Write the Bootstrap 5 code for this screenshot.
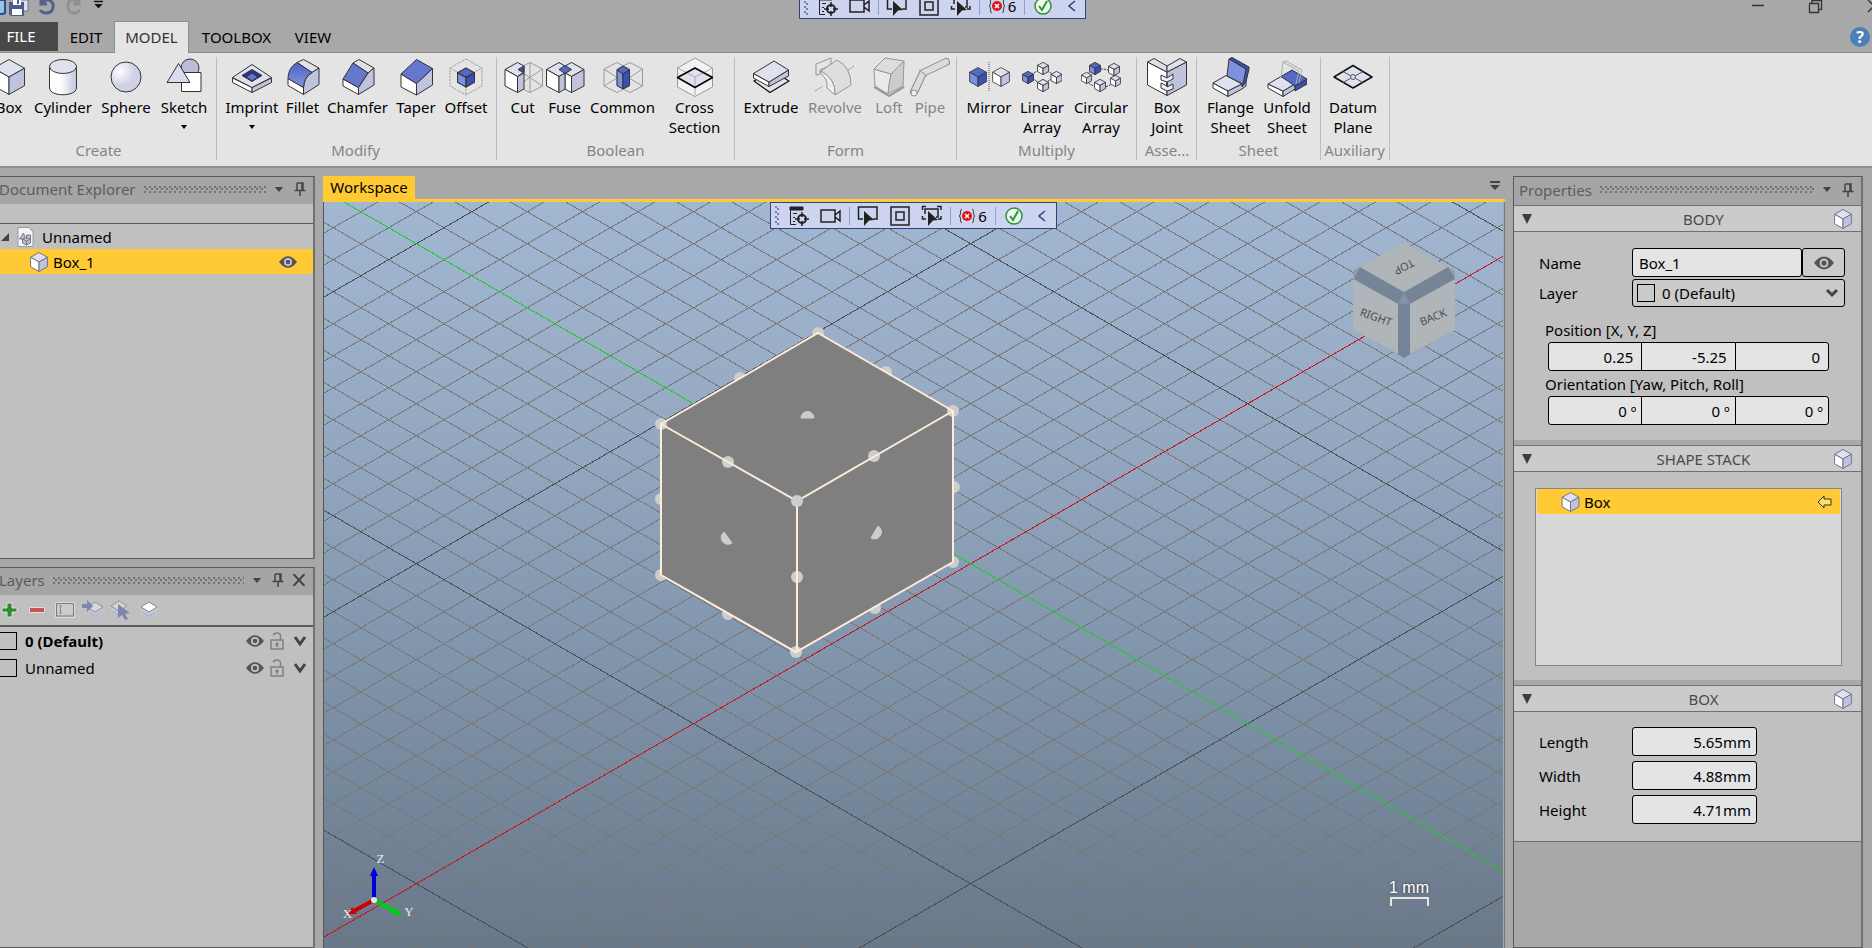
<!DOCTYPE html>
<html lang="en">
<head>
<meta charset="utf-8">
<meta name="viewport" content="width=device-width, initial-scale=1">
<title>Modeler</title>
<link href="https://cdn.jsdelivr.net/npm/bootstrap@5.3.0/dist/css/bootstrap.min.css" rel="stylesheet">
<style>
:root{--line:#5a5a5a;--chrome:#a8a8a8;--panel:#c0c0c0;--accent:#ffca33}
body{font:15px/20px "Noto Sans","Open Sans",sans-serif;color:#000;background:var(--chrome);height:100vh}
svg{display:block;flex:none}
.btn{font-size:15px;line-height:20px;color:#000;padding:0;border:0;border-radius:0}
.btn:disabled{color:#858585;opacity:1}
/* title bar and tabs */
.titlebar{height:21px}
.tabs{height:32px;border-bottom:1px solid #8c8c8c}
.tabs .nav-link{color:#000;padding:0;border:0;border-radius:0;height:31px;line-height:32px;text-align:center}
.tabs .file-tab{background:#484848;color:#fff;width:58px;height:29px;margin-top:1px;line-height:29px;padding-right:16px}
.tabs .nav-link.active{background:#e4e4e4;color:#333;width:75px;height:32px;border:1px solid #8c8c8c;border-bottom:0;border-radius:0;line-height:30px}
.w-edit{width:56px}.w-tool{width:95px}.w-view{width:58px}
.help{width:20px;height:20px;border-radius:50%;background:#4a7fb8;color:#fff;font-weight:700;font-size:16px;margin:6px 2px 0 auto}
/* ribbon */
.ribbon{height:115px;background:#e4e4e4;border-bottom:2px solid #8f8f8f;margin-left:-18px;padding-top:4px}
.rgroup{padding:0 5px 0 4px;border-right:1px solid #bdbdbd;height:103px;margin-right:1px}
.tools{display:grid;height:83px}
.tools .btn{display:flex;flex-direction:column;align-items:center;justify-content:flex-start;text-align:center}
.tools svg.ic{width:40px;height:40px}
.glabel{color:#858585;text-align:center;white-space:nowrap}
.g-create{width:235px}.g-create .tools{grid-template-columns:46px 62px 64px 52px}
.g-modify{width:279px;padding:0 9px 0 6px}.g-modify .tools{grid-template-columns:56px 45px 65px 52px 48px}
.g-bool{width:237px}.g-bool .tools{grid-template-columns:41px 43px 73px 71px}
.g-form{width:221px}.g-form .tools{grid-template-columns:62px 66px 42px 40px}
.g-mult{width:179px}.g-mult .tools{grid-template-columns:54px 52px 66px}
.g-asse{width:59px;padding:0 2px}.g-asse .tools{grid-template-columns:54px}
.g-sheet{width:123px}.g-sheet .tools{grid-template-columns:57px 56px}
.g-aux{width:68px;padding:0 4px 0 2px}.g-aux .tools{grid-template-columns:58px}
.caret{width:0;height:0;border:3px solid transparent;border-top:4px solid #000;border-bottom:0}
.ic{stroke:#333;stroke-width:1;stroke-linejoin:round;fill:none;--t:#dfe1ef;--l:#fff;--r:#c0c3dc}
.blue{--t:#5468c8;--l:#7f90dc;--r:#3c50b4}
.soft{stroke:#6c6f86}
.off{stroke:#959595}
/* floating command bar */
.cmdbar{position:absolute;height:27px;width:287px;background:#ccd4ef;border:1px solid #35407c;z-index:3}
.cmdbar .btn{height:25px;width:32px;display:flex;align-items:center;justify-content:center}
.cmdbar .btn.probs{width:40px}
.cmdbar .btn.fold{width:25px}
.cmdbar .vr{width:1px;height:18px;background:#8fa0cc;opacity:1;margin:auto 2px}
.probs span{padding-left:2px}
.cmdgrip{width:5px;height:20px;margin:auto 3px auto 4px;background:radial-gradient(circle at 1px 1px,#7580ae 1px,transparent 1px) 0 0/5px 5px,radial-gradient(circle at 1px 1px,#7580ae 1px,transparent 1px) 2px 2px/5px 5px}
.bar-main{top:0;left:calc(50% - 144px)}
.bar-top{top:-8px;left:calc(50% - 137px)}
/* docked panels */
.dock{padding-top:8px}
.side-left{width:319px;margin-left:-4px}
.side-right{width:350px;margin:0 9px 0 8px}
.pane{background:var(--panel);border:1px solid var(--line);border-right:2px solid #707070}
.pane-head{height:27px;background:#a5a5a5;color:#5c5c5c;padding:0 7px 3px 2px}
.pane-head .drop{margin:0 10px 0 8px}
.grip{flex:1;height:7px;background:radial-gradient(circle at 1px 1px,#727272 1px,transparent 1px) 0 0/5px 5px,radial-gradient(circle at 1px 1px,#727272 1px,transparent 1px) 2px 2px/5px 5px}
.pane-explorer{height:383px}
.searchrow{height:20px;border-bottom:1px solid #5c5c5c}
.treerow{height:25px}
.sel{background:var(--accent);border-radius:3px}
.tree-child{padding:0 16px 0 32px}
.ltools{height:32px;border-bottom:2px solid #5c5c5c;margin-left:-2px}
.ltools .btn{width:28px;display:flex;justify-content:center}
.lrow{height:27px;padding:0 5px 0 2px}
.lrow .eye{margin:0 6px 0 auto}
.toplit{--top:#fff}
.swatch{width:18px;height:18px;border:1px solid #000;flex:none}
.wtab{background:var(--accent);height:23px;width:92px;line-height:23px;color:#000;text-align:center;text-decoration:none}
.wline{border-bottom:3px solid var(--accent);height:26px}
.view{background:linear-gradient(#a1b7d1,#96a9c3 30%,#8499b0 55%,#697889);border-left:1px solid #555;overflow:hidden}
.viewwrap{border-right:1px solid #787878;padding-right:1px}
.corner{position:absolute}
.nav-cube{top:38px;right:44px}.triad{left:16px;bottom:22px}.scale{right:74px;bottom:42px}
.scale div{font:16px/18px "Liberation Sans",sans-serif;color:#fff;text-shadow:0 0 3px #333}
.bracket{width:39px;height:9px;border:2px solid #e6e6e6;border-bottom:0;margin-left:1px}
/* property sections */
.props{background:var(--chrome)}
.props .pane-head{height:28px;padding-left:5px}
.sec-head{height:27px;background:#cbcbcb;color:#4a4a4a;border-top:1px solid #707070;border-bottom:1px solid #707070}
.sec-head span{flex:1;text-align:center;padding-left:42px}
.sec{background:var(--panel);margin-bottom:5px}
.sec-body{height:208px;padding-top:16px}
.box-body{height:130px;padding-top:15px;border-bottom:1px solid #707070;gap:5px}
.sec label{width:93px;flex:none}
.form-control,.form-select{font-size:15px;line-height:20px;border:1px solid #000;border-radius:3px;background-color:#e4e4e4;color:#000;height:29px;min-height:0;padding:2px 6px}
.name-row{height:29px;margin-bottom:2px}
.form-select{background-color:#cbcbcb;height:28px;padding-left:29px;background-position:right 5px center;background-size:14px 12px;background-image:url("data:image/svg+xml,%3Csvg xmlns='http://www.w3.org/2000/svg' viewBox='0 0 14 12'%3E%3Cpath d='M2 3l5 5 5-5' fill='none' stroke='%23444' stroke-width='3'/%3E%3C/svg%3E")}
.eye-btn{width:43px;height:29px;background:#cbcbcb;border:1px solid #000;border-radius:3px;display:flex;align-items:center;justify-content:center}
.lswatch{position:absolute;left:5px;top:5px}
.pad-l{padding-left:25px}.pad-r{padding-right:16px}
.triple{margin:0 32px 0 34px}
.triple .form-control{text-align:right;padding-right:8px}
.triple.deg .form-control{padding-right:5px}
.cap{margin-left:31px;padding:3px 0 2px}
.cap-first{padding-top:13px}
.size{width:125px;text-align:right;padding-right:5px}
.stack{height:178px;margin:0 19px 0 21px;border:1px solid #85858f;background:#d8d8d8;padding:0 1px}
</style>
</head>
<body class="d-flex flex-column overflow-hidden">
<svg width="0" height="0" class="position-absolute" aria-hidden="true">
  <symbol id="cube" viewBox="-1 -1 34 38" overflow="visible"><path d="M16 0L32 9L16 18L0 9Z" fill="var(--t)"/><path d="M0 9L16 18V36L0 27Z" fill="var(--l)"/><path d="M32 9L16 18V36L32 27Z" fill="var(--r)"/></symbol>
  <symbol id="hex" viewBox="-1 -1 34 38"><path d="M16 0L32 9V27L16 36L0 27V9ZM0 9L16 18L32 9M16 18V36" fill="none"/></symbol>
  <symbol id="eye" viewBox="0 0 18 12"><path d="M0 6Q9-5.500 18 6Q9 17.500 0 6Z" fill="#555" stroke="none"/><circle cx="9" cy="6" r="4" fill="#c6c6c6" stroke="none"/><circle cx="9" cy="6" r="2.300" fill="#555" stroke="none"/></symbol>
  <symbol id="pin" viewBox="0 0 12 14"><path d="M3 1H9V8M3 1V8M0.500 8.500H11.500M6 9V14M8 1V8" fill="none" stroke="#444" stroke-width="1.500"/></symbol>
  <symbol id="down" viewBox="0 0 10 6"><path d="M0 0H10L5 6Z" fill="#444"/></symbol>
  <symbol id="chev" viewBox="0 0 14 12"><path d="M2 2L7 9L12 2" fill="none" stroke="#444" stroke-width="3"/></symbol>
  <symbol id="lock" viewBox="0 0 14 18"><path d="M1 8H13V17H1ZM3.500 3.500Q3.500 1 7 1Q10.500 1 10.500 4V8" fill="none" stroke="#808080" stroke-width="1.500"/><path d="M7 10.500V15M5.500 12H8.500" stroke="#777" stroke-width="1.500"/></symbol>
  <symbol id="layers" viewBox="0 0 18 18"><path d="M9 7L17 12L9 17L1 12Z" fill="#aab5cc" stroke="#ccd"/><path d="M9 4L17 9L9 14L1 9Z" fill="#bcc6dc" stroke="#ccd"/><path d="M9 1L17 6L9 11L1 6Z" fill="var(--top,#ddd)" stroke="#888"/></symbol>
</svg>

<header>
  <div class="titlebar position-relative d-flex justify-content-between overflow-hidden">
    <svg width="110" height="21" viewBox="0 0 110 21" aria-hidden="true">
      <path d="M0 0H5V13Q4 14 0 14" fill="#9bc1e6" stroke="#234f8d" stroke-width="2"/>
      <path d="M16 0H28V11H22" fill="#dde1ee" stroke="#778"/><path d="M9 2H24V16H11L9 14Z" fill="#4d5c8e"/><path d="M13 0H21V5H13ZM12 9H22V15H12Z" fill="#fff"/><path d="M17 0H19V4H17Z" fill="#4d5c8e"/>
      <path d="M41 0V4H47M42 3Q49-4 53 4Q54 13 46 13Q42 13 40 10" fill="none" stroke="#53618f" stroke-width="3"/>
      <path d="M79 0V4H73M78 3Q71-4 68 4Q67 13 74 13Q78 13 80 10" fill="none" stroke="#919191" stroke-width="3"/>
      <path d="M94 1.500H103" stroke="#111" stroke-width="1.500"/><path d="M94.500 4H102.500L98.500 8.500Z" fill="#111"/>
    </svg>
    <svg width="130" height="21" viewBox="1742 0 130 21" fill="none" stroke="#333" stroke-width="1.300" aria-hidden="true"><path d="M1752 5.500H1764M1809.500 3.500H1818.500V12.500H1809.500ZM1812 3V0.500H1821.500V9.500H1819M1868 0L1880 12M1868 12L1880 0"/></svg>
    <div class="cmdbar bar-top d-flex" data-bar></div>
  </div>
  <div class="d-flex tabs">
    <ul class="nav nav-tabs border-0">
      <li><a class="nav-link file-tab" href="#">FILE</a></li>
      <li><a class="nav-link w-edit" href="#">EDIT</a></li>
      <li><a class="nav-link active" href="#">MODEL</a></li>
      <li><a class="nav-link w-tool" href="#">TOOLBOX</a></li>
      <li><a class="nav-link w-view" href="#">VIEW</a></li>
    </ul>
    <button class="btn help">?</button>
  </div>
  <nav class="ribbon d-flex">
    <div class="rgroup g-create"><div class="tools">
      <button class="btn"><svg class="ic" viewBox="0 0 40 40"><use href="#cube" x="3.500" y="1.500" width="33" height="37"/></svg>Box</button>
      <button class="btn"><svg class="ic" viewBox="0 0 40 40"><defs><linearGradient id="gc"><stop offset=".4" stop-color="#fff"/><stop offset="1" stop-color="#c0c3dc"/></linearGradient><radialGradient id="gs" cx=".3" cy=".3"><stop offset="0" stop-color="#fff"/><stop offset="1" stop-color="#cfd1e4"/></radialGradient><linearGradient id="gb" y2="1" x2="0"><stop offset="0" stop-color="#4d62c4"/><stop offset="1" stop-color="#8595dc"/></linearGradient></defs><path d="M6.500 9V31C7 40 33 40 33.500 31V9" fill="url(#gc)"/><ellipse cx="20" cy="9.500" rx="13.500" ry="7" fill="#dfe1ef"/></svg>Cylinder</button>
      <button class="btn"><svg class="ic" viewBox="0 0 40 40"><circle cx="20" cy="20" r="15" fill="url(#gs)"/></svg>Sphere</button>
      <button class="btn"><svg class="ic" viewBox="0 0 40 40"><circle cx="26" cy="11" r="9" fill="#b9bdd8"/><path d="M17.500 15.500H37V34.500H17.500Z" fill="#fff"/><path d="M14.500 6.500L26 25.500H3Z" fill="#d9dcee"/></svg>Sketch<span class="caret mt-2"></span></button>
    </div><div class="glabel">Create</div></div>
    <div class="rgroup g-modify"><div class="tools">
      <button class="btn"><svg class="ic" viewBox="0 0 40 40"><path d="M.5 21L20 30.500V35.500L.5 25.500Z" fill="#fff"/><path d="M39.500 21L20 30.500V35.500L39.500 25.500Z" fill="#c0c3dc"/><path d="M20 7.500L39.500 20.500L20 30.500L.5 20.500Z" fill="#dfe1ef"/><path d="M20 12.500L30 18.500L20 24.500L10 18.500Z" fill="#26359a"/><path d="M20 16L26 20L20 24L14 20Z" fill="#5f73d0"/></svg>Imprint<span class="caret mt-2"></span></button>
      <button class="btn"><svg class="ic" viewBox="0 0 40 40"><path d="M14 5.500L20.500 2.500L36 11L29 15.500Z" fill="#dfe1ef"/><path d="M29 15.500L36 11V27.500L20.500 37.500V30.500Q21 20 29 15.500Z" fill="#c0c3dc"/><path d="M5 21.500V28.500L20.500 37.500V30.500Z" fill="#fff"/><path d="M14 5.500Q5 11 5 21.500L20.500 30.500Q21 20 29 15.500Z" fill="url(#gb)"/></svg>Fillet</button>
      <button class="btn"><svg class="ic" viewBox="0 0 40 40"><path d="M15 6L21 2.500L36 11L30 16Z" fill="#dfe1ef"/><path d="M30 16L36 11V28L20.500 37.500V30.500Z" fill="#c0c3dc"/><path d="M5 22V29L20.500 37.500V30.500Z" fill="#fff"/><path d="M15 6L5 22L20.500 30.500L30 16Z" fill="#6678ce"/></svg>Chamfer</button>
      <button class="btn"><svg class="ic" viewBox="0 0 40 40"><path d="M5 17V30L20.500 38V26.500Z" fill="#fff"/><path d="M36.500 11.500V28L20.500 38V26.500Z" fill="#c0c3dc"/><path d="M20.500 2.500L36.500 11.500L20.500 26.500L5 17Z" fill="#6678ce"/></svg>Taper</button>
      <button class="btn"><svg class="ic" viewBox="0 0 40 40"><use href="#hex" x="3" y="1" width="34" height="38" stroke="#999" stroke-dasharray="2 1"/><g class="blue"><use href="#cube" x="11" y="10" width="18" height="21" stroke-width="2"/></g></svg>Offset</button>
    </div><div class="glabel">Modify</div></div>
    <div class="rgroup g-bool"><div class="tools">
      <button class="btn"><svg class="ic" viewBox="0 0 40 40"><path d="M27 5.500L39.500 12V29L27 35.500L14 29V12ZM27 5.500V35.500M14 12L39.500 29M39.500 12L14 29" stroke="#9a9a9a"/><path d="M14.500 5.500L21 9V15L14.500 19.500L2 12.500Z" fill="#dfe1ef"/><path d="M2 12.500L14.500 19.500V35.500L2 29Z" fill="#fff"/><path d="M14.500 19.500L21 16V32L14.500 35.500Z" fill="#c0c3dc"/><path d="M15 12.500L21 9V16Z" fill="#3c50b4"/></svg>Cut</button>
      <button class="btn"><svg class="ic" viewBox="0 0 40 40"><path d="M14 5.500L20 9L26.500 5.500L39 12.500L26.500 19.500L20 16L14 19.500L1.500 12.500Z" fill="#dfe1ef"/><path d="M1.500 12.500L14 19.500V35.500L1.500 29ZM20 16L26.500 19.500V35.500L20 32Z" fill="#fff"/><path d="M14 19.500L20 16V32L14 35.500ZM39 12.500L26.500 19.500V35.500L39 29Z" fill="#c0c3dc"/><path d="M20 8.500L26.500 12.500L20 16.500L14 12.500Z" fill="#5468c8"/></svg>Fuse</button>
      <button class="btn"><svg class="ic" viewBox="0 0 40 40"><path d="M14 5.500L26.500 12V29L14 35.500L1 29V12ZM27 5.500L39.500 12V29L27 35.500L14 29V12ZM1 12L27 29M39.500 12L14 29M1 29L14 21M39.500 29L26 21" stroke="#9a9a9a"/><path d="M20 9L26.500 13L20 17L14 13Z" fill="#5468c8"/><path d="M14 13L20 17V32L14 28.500Z" fill="#7f90dc"/><path d="M26.500 13L20 17V32L26.500 28.500Z" fill="#3c50b4"/></svg>Common</button>
      <button class="btn"><svg class="ic" viewBox="0 0 40 40"><path d="M20 1L37.500 11V30L20 39.500L2.500 30V11Z" stroke="#9a9a9a" fill="#f2f2f2"/><path d="M20 11L37.500 20.500L20 30.500L2.500 20.500Z" fill="#dfe1ef" stroke="none"/><path d="M2.500 11L20 20L37.500 11M20 20V38" stroke="#aaa"/><path d="M20 11L37.500 20.500L20 30.500L2.500 20.500Z" stroke="#000" stroke-width="1.500"/></svg>Cross<br>Section</button>
    </div><div class="glabel">Boolean</div></div>
    <div class="rgroup g-form"><div class="tools">
      <button class="btn"><svg class="ic" viewBox="0 0 40 40"><path d="M8 21L3 24L19 35.500L38 24L33 21" stroke="#111" stroke-width="1.300"/><path d="M2.500 16.500L18 25V29.500L2.500 21Z" fill="#fff"/><path d="M37.500 13L18 25V29.500L37.500 19Z" fill="#c0c3dc"/><path d="M23 4L37.500 13L18 25L2.500 16.500Z" fill="#dfe1ef"/></svg>Extrude</button>
      <button class="btn" disabled><svg class="ic off" viewBox="0 0 40 40"><path d="M0 34L8 29M33 13L39 9" stroke-dasharray="3 1"/><path d="M1 18V7L16 1V8L5 13V17Z" fill="#e4e4e4"/><path d="M6 14L22 3Q36 10 36 28L20 38Q21 22 6 14Z" fill="#dedede"/><path d="M6 14Q21 22 20 38L12 31Q13 22 6 17Z" fill="#eee"/></svg>Revolve</button>
      <button class="btn" disabled><svg class="ic off" viewBox="0 0 40 40"><path d="M5 30L20 39L35 30" stroke-width="2"/><path d="M5 12L22 17L19 37L6 29Z" fill="#eaeaea"/><path d="M22 17L35 4L34 29L19 37Q20 25 22 17Z" fill="#ccc"/><path d="M16 1L35 4L22 17L5 12Z" fill="#ddd"/></svg>Loft</button>
      <button class="btn" disabled><svg class="ic off" viewBox="0 0 40 40"><path d="M4 35L13 16L36 5" stroke="#8c8c8c" stroke-width="8" stroke-linecap="round"/><path d="M4 35L13 16L36 5" stroke="#dcdcdc" stroke-width="6" stroke-linecap="round"/><path d="M9 13L17 19"/><circle cx="4" cy="36" r="3" fill="#eee"/></svg>Pipe</button>
    </div><div class="glabel">Form</div></div>
    <div class="rgroup g-mult"><div class="tools">
      <button class="btn"><svg class="ic overflow-visible" viewBox="0 0 40 40"><g class="blue"><use href="#cube" x="0" y="10" width="18" height="20" stroke-width="1.500"/></g><path d="M20 5V35" stroke="#555" stroke-dasharray="1 1"/><use href="#cube" x="23" y="10" width="18" height="20" stroke-width="1.500"/></svg>Mirror</button>
      <button class="btn"><svg class="ic" viewBox="0 0 40 40"><path d="M7 19L20 11L34 19L20 28Z" stroke-dasharray="2 1"/><g stroke-width="2.500"><g class="blue"><use href="#cube" x="0" y="14" width="12" height="13"/></g><use href="#cube" x="15" y="5" width="12" height="13"/><use href="#cube" x="28.500" y="14" width="12" height="13"/><use href="#cube" x="15" y="22" width="12" height="13"/></g></svg>Linear<br>Array</button>
      <button class="btn"><svg class="ic" viewBox="0 0 40 40"><ellipse cx="20" cy="21" rx="15" ry="9" stroke-dasharray="2 1"/><g stroke-width="2.500"><g class="blue"><use href="#cube" x="8" y="5" width="12" height="13"/></g><use href="#cube" x="27" y="6" width="12" height="13"/><use href="#cube" x="0" y="15" width="11" height="12"/><use href="#cube" x="29" y="18" width="11" height="12"/><use href="#cube" x="13" y="22" width="12" height="13"/></g></svg>Circular<br>Array</button>
    </div><div class="glabel">Multiply</div></div>
    <div class="rgroup g-asse"><div class="tools">
      <button class="btn"><svg class="ic" viewBox="0 0 40 40"><path d="M.5 5L20 15V38.500L.5 28Z" fill="#fff"/><path d="M.5 5L7 1.500L20 9V15Z" fill="#dfe1ef"/><path d="M20 15L39.500 5V28L20 38.500Z" fill="#c0c3dc"/><path d="M20 9L33 1.500L39.500 5L20 15Z" fill="#dfe1ef"/><path d="M14 18L20 21L26 17V22L20 25V30L26 27V32L20 34L14 31V26L20 29V25L14 23Z" fill="#eef"/></svg>Box<br>Joint</button>
    </div><div class="glabel">Asse...</div></div>
    <div class="rgroup g-sheet"><div class="tools">
      <button class="btn"><svg class="ic" viewBox="0 0 40 40"><path d="M2 26L17 34V39.500L2 31Z" fill="#fff"/><path d="M2 26L15 18.500L31 27L17 34Z" fill="#dfe1ef"/><path d="M17 34L31 27L35 24V29L31 32L17 39.500Z" fill="#c0c3dc"/><path d="M18 2L21 .5L38 10V12L35 25L31 30V27L35 12Z" fill="#3c50b4"/><path d="M18 2L35 12L32 27L16 19Z" fill="#7f90dc"/></svg>Flange<br>Sheet</button>
      <button class="btn"><svg class="ic" viewBox="0 0 40 40"><path d="M1 27L16 34V39.500L1 31Z" fill="#fff"/><path d="M16 34L28 27V32L16 39.500Z" fill="#c0c3dc"/><path d="M1 27L14 19.500L28 27L16 34Z" fill="#dfe1ef"/><path d="M28 29L40 22V27L28 34Z" fill="#3c50b4"/><path d="M14 19.500L25 13L40 22L28 29Z" fill="#5468c8"/><path d="M14 20L16 5L19 4L35 13L32 26M16 5L32 14L29 27" stroke="#aaa"/></svg>Unfold<br>Sheet</button>
    </div><div class="glabel">Sheet</div></div>
    <div class="rgroup g-aux"><div class="tools">
      <button class="btn"><svg class="ic" viewBox="0 0 40 40"><path d="M20 8.500L39 20L20 31L1 20Z" fill="#dfe1ef" stroke="#111" stroke-width="1.500"/><path d="M10 14.500L30 25.500M30 14.500L10 25.500" stroke="#555"/><circle cx="20" cy="20" r="2.500" fill="#dfe1ef" stroke="#555"/></svg>Datum<br>Plane</button>
    </div><div class="glabel">Auxiliary</div></div>
  </nav>
</header>

<main class="d-flex flex-fill overflow-hidden">
  <aside class="side-left dock flex-shrink-0 d-flex flex-column gap-2">
    <section class="pane pane-explorer">
      <div class="pane-head d-flex align-items-center"><span class="me-2">Document Explorer</span><span class="grip"></span><svg class="drop" width="10" height="5"><use href="#down"/></svg><svg width="12" height="14"><use href="#pin"/></svg></div>
      <div class="searchrow"></div>
      <div class="treerow d-flex align-items-center ps-1"><svg width="8" height="8"><path d="M8 0V8H0Z" fill="#444"/></svg>
        <svg class="ms-2 me-2" width="17" height="20" viewBox="0 0 16 20"><path d="M.5.5H11.500L15.500 5V19.500H.5Z" fill="#f5f5f8" stroke="#99a"/><path d="M2 12L6 6L8 12ZM9 8H13V12H9ZM5 12L9 14V18L5 16ZM13 12L9 14V18L13 16Z" fill="#b8bdd0" stroke="#778"/></svg>Unnamed</div>
      <div class="treerow sel tree-child d-flex align-items-center"><svg class="ic soft me-1" width="20" height="20"><use href="#cube" width="20" height="20" stroke-width="1.800"/></svg>Box_1<svg class="ms-auto" width="18" height="12"><use href="#eye"/></svg></div>
    </section>
    <section class="pane flex-fill">
      <div class="pane-head d-flex align-items-center"><span class="me-2">Layers</span><span class="grip"></span><svg class="drop" width="10" height="5"><use href="#down"/></svg><svg width="12" height="14"><use href="#pin"/></svg><svg class="ms-2" width="14" height="12" viewBox="0 0 14 12"><path d="M1.500 0L12.500 12M12.500 0L1.500 12" stroke="#444" stroke-width="2"/></svg></div>
      <div class="ltools d-flex align-items-center">
        <button class="btn" aria-label="Add"><svg width="18" height="18"><path d="M7 2H12V7H17V11H12V16H7V11H2V7H7Z" fill="#2c8e2c" stroke="#ddd"/></svg></button>
        <button class="btn" aria-label="Remove"><svg width="16" height="6"><path d="M.5.5H15.500V5.500H.5Z" fill="#c85656" stroke="#ddd"/></svg></button>
        <button class="btn" aria-label="Rename"><svg width="20" height="16"><path d="M.5.5H19.500V15.500H.5Z" stroke="#ddd" fill="none"/><path d="M1.500 1.500H18.500V14H1.500Z" fill="#ccc" stroke="#777"/><path d="M4 4H7M5.500 4V11M4 11H7" stroke="#888"/></svg></button>
        <button class="btn" aria-label="Move"><svg width="22" height="20"><use href="#layers" x="4" y="1" width="18" height="18" opacity=".8"/><path d="M0 4H5V0L11 6L5 12V8H0Z" fill="#7d86ad"/></svg></button>
        <button class="btn" aria-label="Select"><svg width="22" height="20"><use href="#layers" width="18" height="18" opacity=".8"/><path d="M8 4L20 13L15 14L18 19L15 20L12 15L8 18Z" fill="#7d86ad"/></svg></button>
        <button class="btn toplit" aria-label="Layers"><svg width="18" height="18"><use href="#layers"/></svg></button>
      </div>
      <div class="lrow d-flex align-items-center"><span class="swatch me-2"></span><b>0 (Default)</b><svg class="eye" width="18" height="12"><use href="#eye"/></svg><svg width="14" height="18"><use href="#lock"/></svg><svg class="ms-2" width="16" height="12"><use href="#chev"/></svg></div>
      <div class="lrow d-flex align-items-center"><span class="swatch me-2"></span><span>Unnamed</span><svg class="eye" width="18" height="12"><use href="#eye"/></svg><svg width="14" height="18"><use href="#lock"/></svg><svg class="ms-2" width="16" height="12"><use href="#chev"/></svg></div>
    </section>
  </aside>

  <section class="dock flex-fill d-flex flex-column ms-2">
    <div class="wline d-flex justify-content-between"><a href="#" class="wtab">Workspace</a><svg class="mt-1 me-1" width="12" height="12"><path d="M1 2H11" stroke="#444" stroke-width="2"/><path d="M1 5H11L6 10Z" fill="#444"/></svg></div>
    <div class="viewwrap flex-fill d-flex">
      <div class="view flex-fill position-relative" id="view">
        <svg class="position-absolute w-100 h-100" aria-label="3D scene">
          <g transform="translate(-324 -202)" fill="none">
            <g shape-rendering="crispEdges"><path id="minor" stroke="#787878"/><path id="major" stroke="#4a4f55"/><path id="xaxis" stroke="#c8141e"/><path id="yaxis" stroke="#1ecc28"/></g>
            <g fill="#cdcdcd"><circle cx="818" cy="333" r="6"/><circle cx="740" cy="378" r="6"/><circle cx="886" cy="372" r="6"/><circle cx="661" cy="499" r="6"/><circle cx="954" cy="487" r="6"/><circle cx="661" cy="575" r="6"/><circle cx="728" cy="614" r="6"/><circle cx="953" cy="562" r="6"/><circle cx="875" cy="608" r="6"/></g>
            <path d="M818 333L953 411V562L796 652L661 575V424Z" fill="#7f7f7f"/>
            <g fill="#cdcdcd"><path d="M801 418A6 6 0 0 1 814 418ZM724 532L732 543A6 6 0 0 1 724 532ZM878 526L871 538A6 6 0 0 0 878 526Z" stroke="#cdcdcd"/><circle cx="661" cy="424" r="6"/><circle cx="953" cy="411" r="6"/><circle cx="728" cy="462" r="6"/><circle cx="874" cy="456" r="6"/><circle cx="797" cy="577" r="6"/><circle cx="796" cy="652" r="6"/></g>
            <path d="M818 333L953 411V562L796 652L661 575V424ZM661 424L797 501L953 411M797 501V652" stroke="#ffecd8" stroke-width="2"/>
            <circle cx="797" cy="501" r="6" fill="#cdcdcd"/>
          </g>
        </svg>
        <div class="cmdbar bar-main d-flex" data-bar></div>
        <svg class="corner nav-cube" width="108" height="120" viewBox="1351 242 108 120">
          <path d="M1404 244L1455 273V332L1404 360L1353 332V273Z" fill="#8f9cab"/>
          <path d="M1360 269L1404 294L1398 306L1354 281ZM1448 269L1404 294L1410 306L1455 281ZM1398 306L1404 294L1410 306V356L1404 360L1398 356Z" fill="#768497"/>
          <path d="M1404 294L1410 306H1398Z" fill="#8494a6"/>
          <path d="M1404 244L1448 269L1404 294L1360 269ZM1353 281L1398 306V356L1353 332ZM1410 306L1455 281V332L1410 356Z" fill="#b0b5b9"/>
          <g font-family="Noto Sans" font-size="11" fill="#4d4f52" text-anchor="middle"><text transform="rotate(20 1376 319)" x="1376" y="323">RIGHT</text><text transform="rotate(-22 1433 319)" x="1433" y="323">BACK</text><text transform="rotate(152 1404 269)" x="1404" y="273">TOP</text></g>
        </svg>
        <svg class="corner triad" width="80" height="76" viewBox="340 850 80 76">
          <path d="M374 900V872" stroke="#00d" stroke-width="4"/><path d="M374 867L378 876H370Z" fill="#00d"/>
          <path d="M374 900L352 912" stroke="#d00000" stroke-width="4"/><path d="M348 914L352 907L357 914Z" fill="#d00000"/>
          <path d="M374 900L396 912" stroke="#00cc10" stroke-width="4"/><path d="M402 916L392 914L396 907Z" fill="#00cc10"/><circle cx="374" cy="900" r="3" fill="#e8e8e8"/>
          <g font-family="Liberation Serif" font-size="13" fill="#e8ecf0" text-anchor="middle"><text x="380.500" y="863">Z</text><text x="347.500" y="918">X</text><text x="409" y="916">Y</text></g>
        </svg>
        <div class="corner scale"><div>1 mm</div><span class="bracket d-block"></span></div>
      </div>
    </div>
  </section>

  <aside class="side-right dock flex-shrink-0 d-flex">
    <div class="pane props flex-fill">
      <div class="pane-head d-flex align-items-center"><span class="me-2">Properties</span><span class="grip"></span><svg class="drop" width="10" height="5"><use href="#down"/></svg><svg width="12" height="14"><use href="#pin"/></svg></div>
      <section class="sec">
        <div class="sec-head d-flex align-items-center px-2"><svg width="10" height="10"><path d="M0 0H10L5 10Z" fill="#3c3c3c"/></svg><span>BODY</span><svg class="ic soft" width="20" height="20"><use href="#cube" width="20" height="20" stroke-width="1.800"/></svg></div>
        <div class="sec-body">
          <div class="d-flex pad-l pad-r align-items-center name-row"><label for="nm">Name</label><input id="nm" class="form-control" value="Box_1"><button class="btn eye-btn flex-shrink-0" aria-label="Visibility"><svg width="20" height="14"><use href="#eye"/></svg></button></div>
          <div class="d-flex pad-l pad-r align-items-center"><label for="ly">Layer</label><div class="position-relative flex-fill"><select id="ly" class="form-select"><option>0 (Default)</option></select><span class="swatch lswatch"></span></div></div>
          <div class="cap cap-first" id="pos">Position [X, Y, Z]</div>
          <div class="input-group triple w-auto"><input class="form-control" aria-labelledby="pos" value="0.25"><input class="form-control" aria-labelledby="pos" value="-5.25"><input class="form-control" aria-labelledby="pos" value="0"></div>
          <div class="cap" id="ori">Orientation [Yaw, Pitch, Roll]</div>
          <div class="input-group triple deg w-auto"><input class="form-control" aria-labelledby="ori" value="0 º"><input class="form-control" aria-labelledby="ori" value="0 º"><input class="form-control" aria-labelledby="ori" value="0 º"></div>
        </div>
      </section>
      <section class="sec">
        <div class="sec-head d-flex align-items-center px-2"><svg width="10" height="10"><path d="M0 0H10L5 10Z" fill="#3c3c3c"/></svg><span>SHAPE STACK</span><svg class="ic soft" width="20" height="20"><use href="#cube" width="20" height="20" stroke-width="1.800"/></svg></div>
        <div class="sec-body"><div class="stack"><div class="treerow sel d-flex align-items-center ps-4 pe-2"><svg class="ic soft me-1" width="19" height="20"><use href="#cube" width="19" height="20" stroke-width="1.800"/></svg>Box<svg class="ms-auto" width="15" height="14"><path d="M1 7L7 1V4H14V10H7V13Z" fill="#ffe066" stroke="#333"/></svg></div></div></div>
      </section>
      <section class="sec">
        <div class="sec-head d-flex align-items-center px-2"><svg width="10" height="10"><path d="M0 0H10L5 10Z" fill="#3c3c3c"/></svg><span>BOX</span><svg class="ic soft" width="20" height="20"><use href="#cube" width="20" height="20" stroke-width="1.800"/></svg></div>
        <div class="box-body d-flex flex-column pad-l">
          <div class="d-flex align-items-center"><label for="ln">Length</label><input id="ln" class="form-control size" value="5.65mm"></div>
          <div class="d-flex align-items-center"><label for="wd">Width</label><input id="wd" class="form-control size" value="4.88mm"></div>
          <div class="d-flex align-items-center"><label for="ht">Height</label><input id="ht" class="form-control size" value="4.71mm"></div>
        </div>
      </section>
    </div>
  </aside>
</main>

<script>
// Command bar: shared by the window frame and the workspace
const bar = `<span class="cmdgrip"></span>
<button class="btn" aria-label="View options"><svg width="22" height="22" fill="none" stroke="#222"><path d="M2 2H15V5H2Z" fill="#222"/><path d="M2.500 4V19.500H8M5 8.500H9M5 12.500H7M5 16.500H7"/><circle cx="14" cy="14" r="4" stroke-width="2"/><path d="M14 7V12M14 16V21M7 14H12M16 14H21" stroke-width="1.500"/></svg></button>
<button class="btn" aria-label="Camera"><svg width="22" height="16" fill="none" stroke="#222" stroke-width="1.500"><path d="M1 2H15V14H1ZM15 7L20 3V13L15 9"/></svg></button>
<span class="vr"></span>
<button class="btn" aria-label="Select"><svg width="22" height="22"><path d="M6 14H1.500V2H20V14H16" fill="none" stroke="#222" stroke-width="1.500"/><path d="M7 6L17 15L12 15.500L7 21Z" fill="#222"/></svg></button>
<button class="btn" aria-label="Frame"><svg width="20" height="20" fill="none" stroke="#222" stroke-width="1.500"><path d="M1 1H19V19H1ZM6 6H14V14H6Z"/></svg></button>
<button class="btn" aria-label="Box select"><svg width="22" height="22"><path d="M1.500 5V1.500H5M16 1.500H20V5M1.500 11V14H5M20 11V14H17M4 9V4H17V12H15" fill="none" stroke="#222" stroke-width="1.500"/><path d="M7 6L17 15L12 15.500L7 21Z" fill="#222"/></svg></button>
<span class="vr"></span>
<button class="btn probs"><svg width="18" height="18" fill="none"><path d="M4 2Q2 2 2.500 6Q2.500 9 1 9Q2.500 9 2.500 12Q2 16 4 16M14 2Q16 2 15.500 6Q15.500 9 17 9Q15.500 9 15.500 12Q16 16 14 16" stroke="#444"/><circle cx="9" cy="9" r="5" fill="#e01414"/><path d="M7 7L11 11M11 7L7 11" stroke="#fff" stroke-width="1.500"/></svg><span>6</span></button>
<span class="vr"></span>
<button class="btn" aria-label="Valid"><svg width="18" height="18"><circle cx="9" cy="9" r="8" fill="#edf7ed" stroke="#2f8f3a" stroke-width="1.500"/><path d="M5 9L8 13L13 4" fill="none" stroke="#2a9a34" stroke-width="2"/></svg></button>
<button class="btn fold" aria-label="Collapse"><svg width="8" height="12"><path d="M7 1L1 6L7 11" fill="none" stroke="#35407c" stroke-width="1.500"/></svg></button>`;
document.querySelectorAll('[data-bar]').forEach(e => e.innerHTML = bar);

// Isometric ground grid around the origin, a darker line at every tenth cell
const ox = 970.6, oy = 563.7, cell = 32, s = Math.tan(Math.PI / 6), L = 1600;
const seg = (k, d) => `M${ox - L} ${oy + k * cell - d * s * L}L${ox + L} ${oy + k * cell + d * s * L}`;
let minor = '', major = '';
for (let k = -60; k <= 60; k++) {
  if (k === 0) continue;
  const p = seg(k, 1) + seg(k, -1);
  if (k % 10) minor += p; else major += p;
}
const put = (id, d) => document.getElementById(id).setAttribute('d', d);
put('minor', minor); put('major', major); put('xaxis', seg(0, -1)); put('yaxis', seg(0, 1));
</script>
<script src="https://cdn.jsdelivr.net/npm/bootstrap@5.3.0/dist/js/bootstrap.bundle.min.js"></script>
</body>
</html>
